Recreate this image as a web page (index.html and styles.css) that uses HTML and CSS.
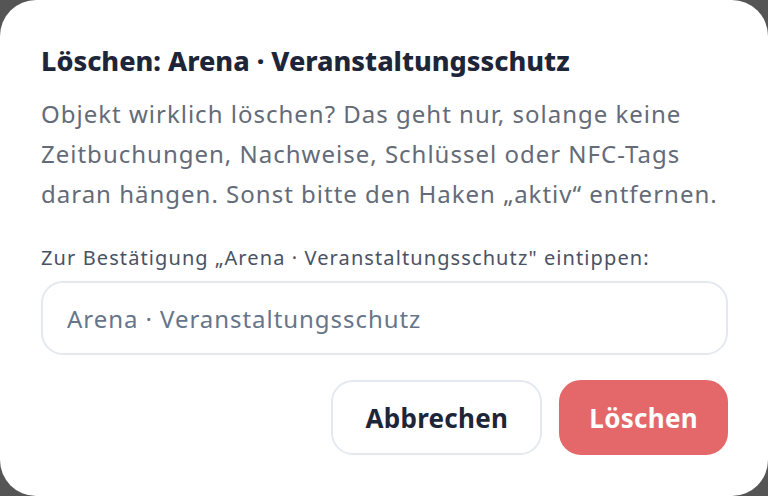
FILE: index.html
```html
<!DOCTYPE html>
<html lang="de">
<head>
    <meta charset="UTF-8">
    <meta name="viewport" content="width=device-width, initial-scale=1.0">
    <title>Löschen</title>
    <link rel="stylesheet" href="styles.css">
</head>
<body>
    <div class="modal">
        <h2 class="modal-title">Löschen: Arena · Veranstaltungsschutz</h2>
        <p class="modal-text">Objekt wirklich löschen? Das geht nur, solange keine Zeitbuchungen, Nachweise, Schlüssel oder NFC-Tags daran hängen. Sonst bitte den Haken „aktiv“ entfernen.</p>
        <label class="confirm-label" for="confirmInput">Zur Bestätigung „Arena · Veranstaltungsschutz" eintippen:</label>
        <input type="text" id="confirmInput" class="confirm-input" placeholder="Arena · Veranstaltungsschutz">
        <div class="modal-actions">
            <button class="btn btn-cancel">Abbrechen</button>
            <button class="btn btn-delete">Löschen</button>
        </div>
    </div>
</body>
</html>
```

FILE: styles.css
```css
html, body {
    margin: 0;
    padding: 0;
    height: 100%;
}
body {
    background-color: #555;
    font-family: "Noto Sans", "Open Sans", sans-serif;
}
.modal {
    box-sizing: border-box;
    width: 768px;
    height: 496px;
    background-color: #fff;
    border-radius: 36px;
    padding: 38px 40px 0 41px;
}
.modal-title {
    margin: 0;
    font-size: 27px;
    font-weight: 800;
    color: #1e2538;
    line-height: 46px;
}
.modal-text {
    margin: 10px 0 0;
    font-size: 24px;
    letter-spacing: 1px;
    line-height: 40px;
    color: #646b78;
}
.confirm-label {
    display: block;
    margin-top: 29px;
    font-size: 20px;
    letter-spacing: 1.1px;
    line-height: 30px;
    color: #4a5263;
}
.confirm-input {
    box-sizing: border-box;
    display: block;
    width: 100%;
    height: 74px;
    margin-top: 8px;
    padding: 0 24px;
    border: 2px solid #e4e9ef;
    border-radius: 22px;
    font-family: inherit;
    font-size: 24px;
    letter-spacing: 0.95px;
    color: #1e2538;
    outline: none;
}
.confirm-input::placeholder {
    color: #67758a;
}
.modal-actions {
    display: flex;
    justify-content: flex-end;
    gap: 17px;
    margin-top: 25px;
}
.btn {
    height: 75px;
    padding: 0 32px;
    border-radius: 22px;
    font-family: inherit;
    font-size: 26px;
    font-weight: 700;
    letter-spacing: 0.3px;
    cursor: pointer;
}
.btn-cancel {
    background-color: #fff;
    border: 2px solid #e4e9ef;
    color: #1e2538;
}
.btn-delete {
    padding: 0 28px;
    background-color: #e4686a;
    border: 2px solid #e4686a;
    color: #fff;
}
```
